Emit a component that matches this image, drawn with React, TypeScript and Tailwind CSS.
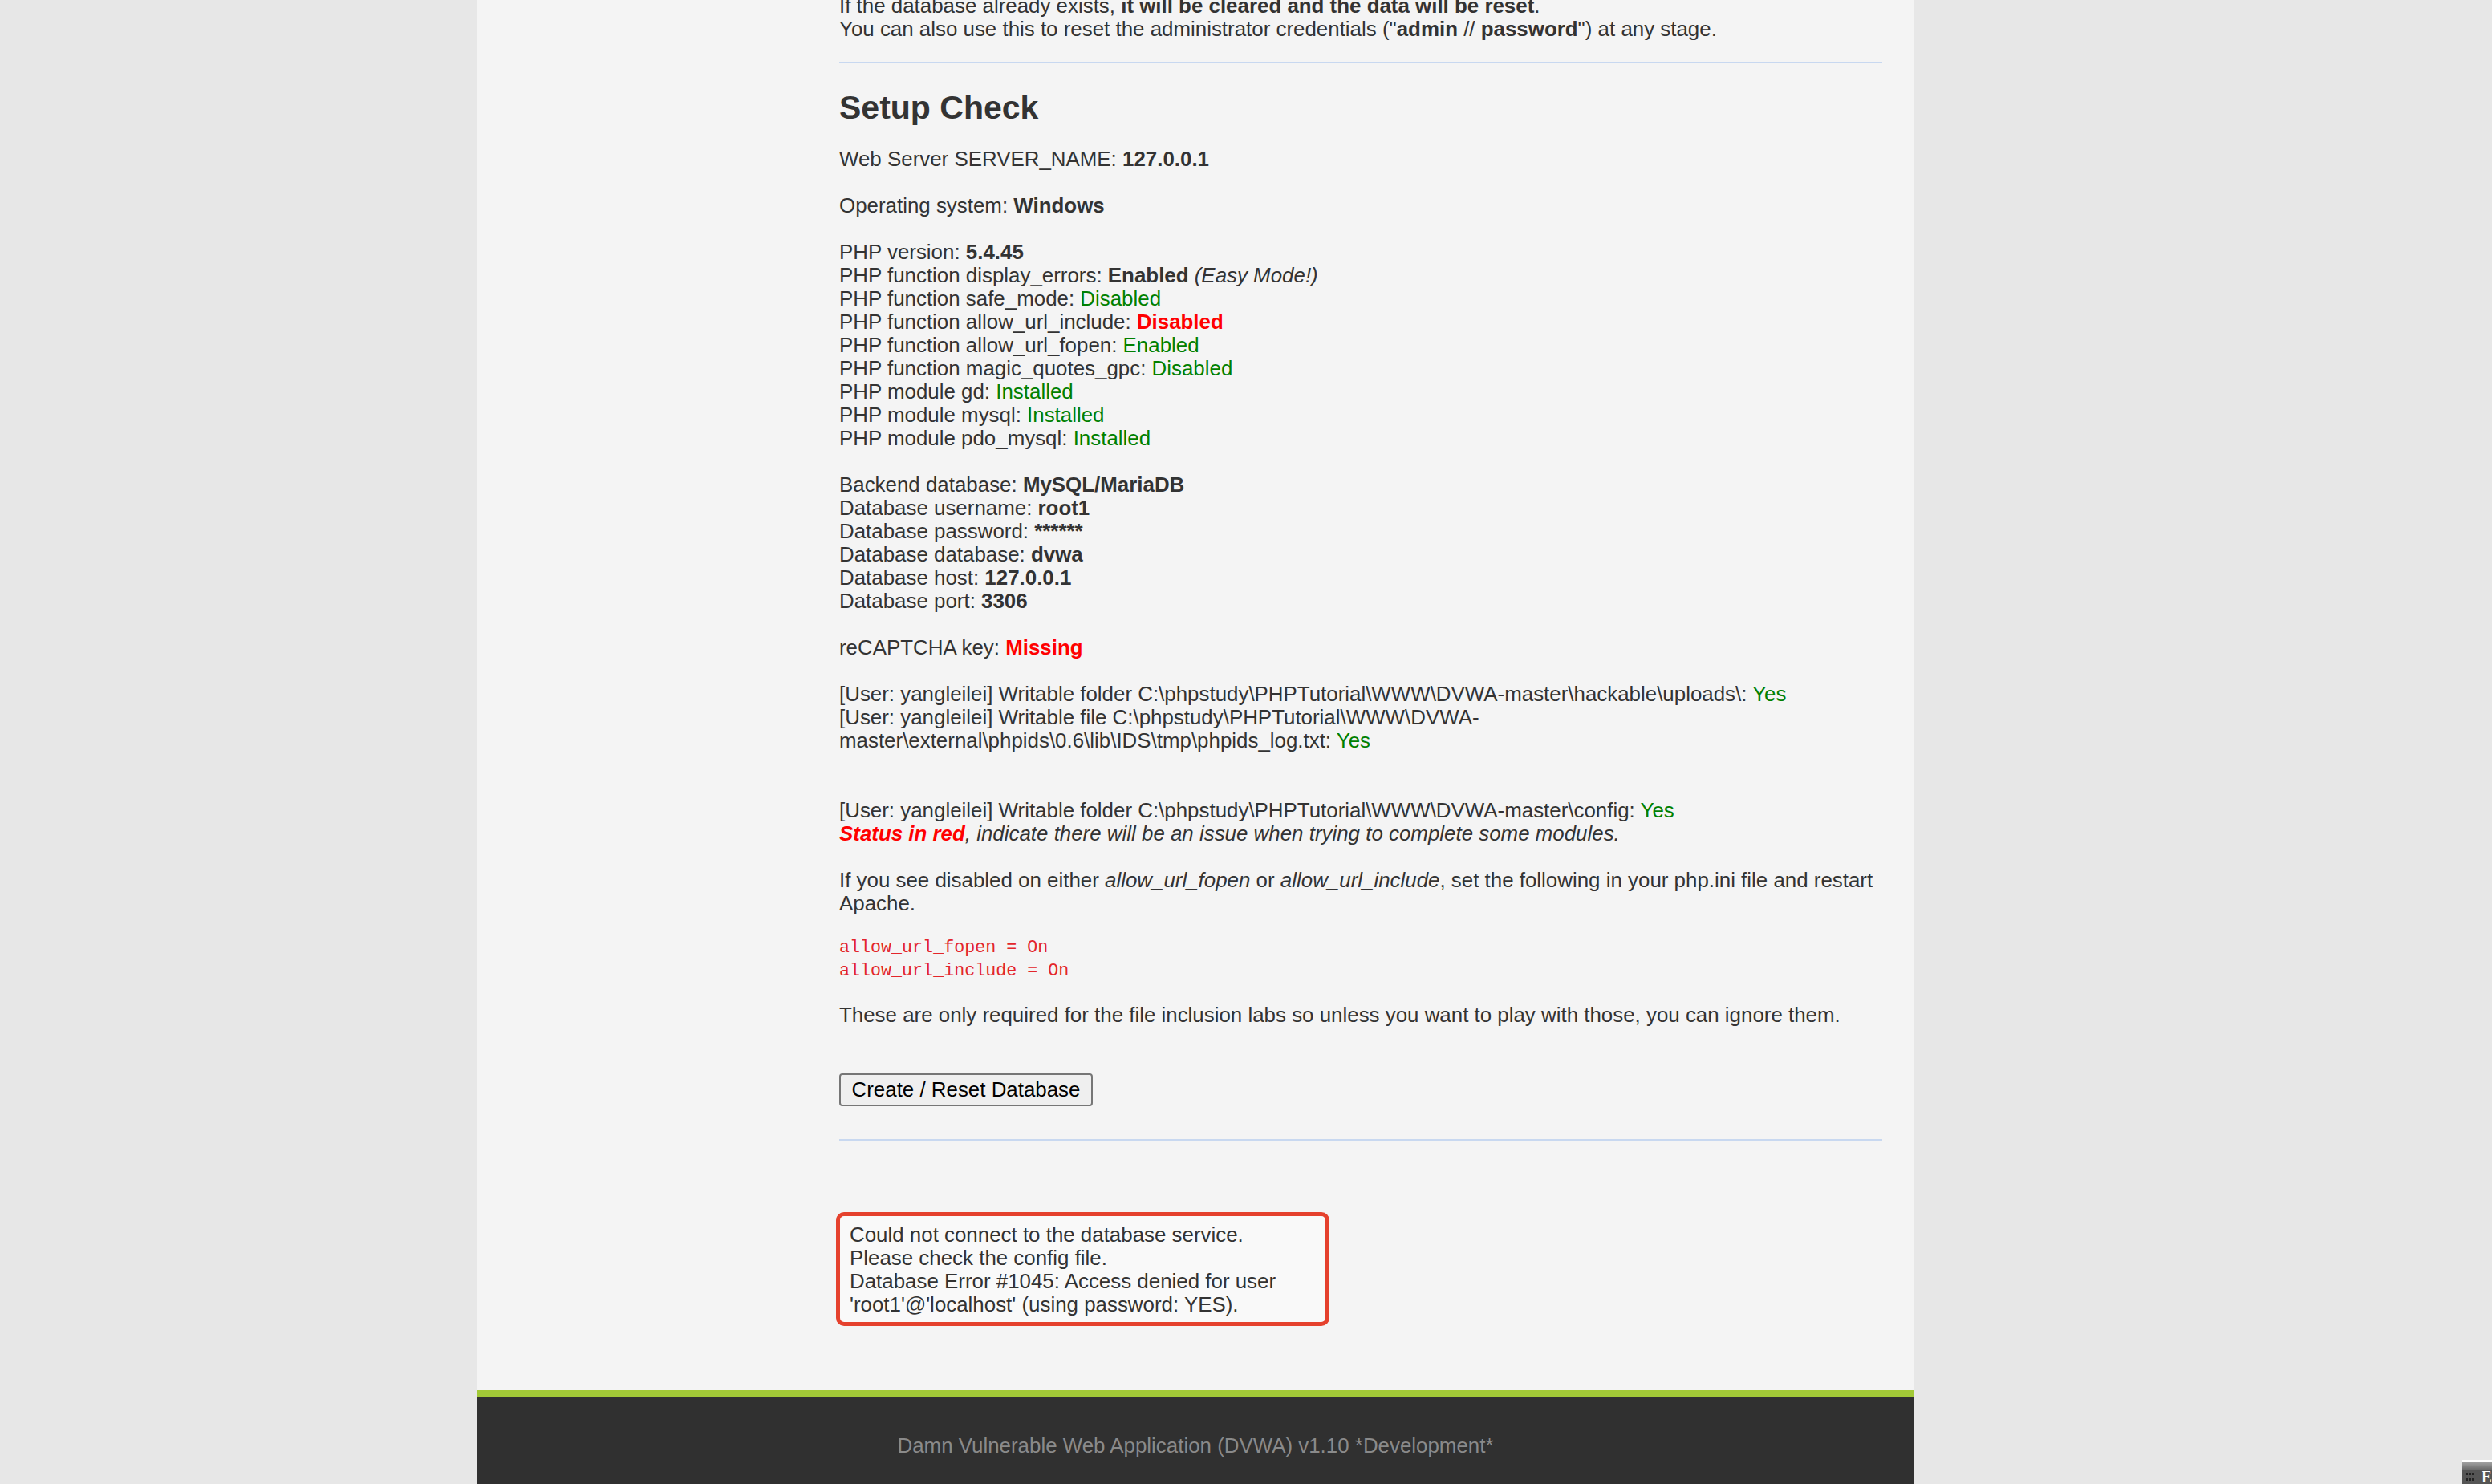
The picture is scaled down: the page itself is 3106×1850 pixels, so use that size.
const Ok = ({ children }: { children: React.ReactNode }) => (
  <span className="text-[#008000]">{children}</span>
);

const Bad = ({ children }: { children: React.ReactNode }) => (
  <span className="font-bold text-[#ff0000]">{children}</span>
);

const Rule = ({ className }: { className: string }) => (
  <div className={`h-[2px] w-[1300px] bg-[#c8d8f0] ${className}`} />
);

const App = () => {
  return (
    <div className="relative h-[1850px] overflow-hidden bg-[#e7e7e7] font-['Liberation_Sans',Arial,sans-serif] text-[#333]">
      <div className="ml-[595px] flex h-full w-[1790px] flex-col bg-[#f4f4f4]">
        <div className="flex-1 pl-[451px]">
          <div className="-mt-[7px] w-[1300px] text-[25.9px] leading-[29px]">
            <p>
              If the database already exists,{" "}
              <b>it will be cleared and the data will be reset</b>.
              <br />
              You can also use this to reset the administrator credentials ("
              <b>admin</b> // <b>password</b>") at any stage.
            </p>

            <Rule className="mt-[26px]" />

            <h2 className="mt-[32px] text-[41px] font-bold leading-[47px] text-[#333]">
              Setup Check
            </h2>

            <div className="mt-[26px]">
              Web Server SERVER_NAME: <b>127.0.0.1</b>
              <br />
              <br />
              Operating system: <b>Windows</b>
              <br />
              <br />
              PHP version: <b>5.4.45</b>
              <br />
              PHP function display_errors: <b>Enabled</b> <i>(Easy Mode!)</i>
              <br />
              PHP function safe_mode: <Ok>Disabled</Ok>
              <br />
              PHP function allow_url_include: <Bad>Disabled</Bad>
              <br />
              PHP function allow_url_fopen: <Ok>Enabled</Ok>
              <br />
              PHP function magic_quotes_gpc: <Ok>Disabled</Ok>
              <br />
              PHP module gd: <Ok>Installed</Ok>
              <br />
              PHP module mysql: <Ok>Installed</Ok>
              <br />
              PHP module pdo_mysql: <Ok>Installed</Ok>
              <br />
              <br />
              Backend database: <b>MySQL/MariaDB</b>
              <br />
              Database username: <b>root1</b>
              <br />
              Database password: <b>******</b>
              <br />
              Database database: <b>dvwa</b>
              <br />
              Database host: <b>127.0.0.1</b>
              <br />
              Database port: <b>3306</b>
              <br />
              <br />
              reCAPTCHA key: <Bad>Missing</Bad>
              <br />
              <br />
              [User: yangleilei] Writable folder
              C:\phpstudy\PHPTutorial\WWW\DVWA-master\hackable\uploads\:{" "}
              <Ok>Yes</Ok>
              <br />
              [User: yangleilei] Writable file C:\phpstudy\PHPTutorial\WWW\DVWA-
              <br />
              master\external\phpids\0.6\lib\IDS\tmp\phpids_log.txt: <Ok>Yes</Ok>
              <br />
              <br />
              <br />
              [User: yangleilei] Writable folder
              C:\phpstudy\PHPTutorial\WWW\DVWA-master\config: <Ok>Yes</Ok>
              <br />
              <i>
                <Bad>Status in red</Bad>, indicate there will be an issue when
                trying to complete some modules.
              </i>
              <br />
              <br />
              If you see disabled on either <i>allow_url_fopen</i> or{" "}
              <i>allow_url_include</i>, set the following in your php.ini file
              and restart Apache.
            </div>

            <pre className="my-[26px] font-['Liberation_Mono','Courier_New',monospace] text-[21.7px] leading-[29px] text-[#e3262b]">
              {"allow_url_fopen = On\nallow_url_include = On"}
            </pre>

            <p>
              These are only required for the file inclusion labs so unless you
              want to play with those, you can ignore them.
            </p>

            <button
              type="button"
              className="mt-[58px] h-[41px] w-[316px] rounded-[4px] border-2 border-[#767676] bg-[#efefef] text-[25.9px] leading-none text-black"
            >
              Create / Reset Database
            </button>

            <Rule className="mt-[41px]" />

            <div className="-ml-[4px] mt-[89px] w-[615px] rounded-[10px] border-[5px] border-[#e5412d] bg-[#f9f9f9] pb-[7.5px] pl-[12px] pt-[8.5px]">
              Could not connect to the database service.
              <br />
              Please check the config file.
              <br />
              Database Error #1045: Access denied for user
              <br />
              'root1'@'localhost' (using password: YES).
            </div>
          </div>
        </div>

        <footer className="h-[117px] border-t-[9px] border-[#a2c937] bg-[#303030] pt-[46px] text-center text-[25.9px] leading-[29px] text-[#8a8a8a]">
          Damn Vulnerable Web Application (DVWA) v1.10 *Development*
        </footer>
      </div>

      {/* floating widget peeking in at the bottom-right corner */}
      <div className="absolute bottom-0 right-0 flex h-[30px] w-[37px] flex-col border-t-2 border-white">
        <div className="h-[10px] bg-gradient-to-b from-[#a8a8a8] to-[#6a6a6a]" />
        <div className="flex flex-1 bg-[#555]">
          <div className="flex flex-col gap-[4px] pl-[4px] pt-[4px]">
            <div className="flex gap-[1px]">
              <span className="h-[3px] w-[3px] bg-[#222]" />
              <span className="h-[3px] w-[3px] bg-[#222]" />
              <span className="h-[3px] w-[3px] bg-[#222]" />
            </div>
            <div className="flex gap-[1px]">
              <span className="h-[3px] w-[3px] bg-[#222]" />
              <span className="h-[3px] w-[3px] bg-[#222]" />
              <span className="h-[3px] w-[3px] bg-[#222]" />
            </div>
          </div>
          <span className="ml-auto font-['Liberation_Serif',serif] text-[22px] leading-[18px] text-white">
            E
          </span>
        </div>
      </div>
    </div>
  );
};

export default App;
